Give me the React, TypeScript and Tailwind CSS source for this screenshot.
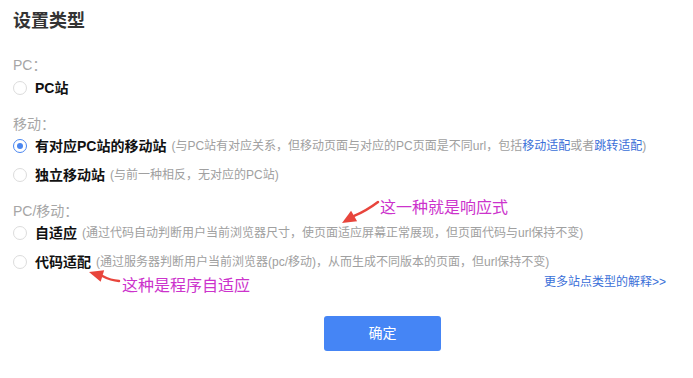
import { useState } from "react"

type Option = {
    id: string
    label: string
    desc?: React.ReactNode
}

const groups: { title: string; options: Option[] }[] = [
    {
        title: "PC：",
        options: [{ id: "pc", label: "PC站" }],
    },
    {
        title: "移动：",
        options: [
            {
                id: "m1",
                label: "有对应PC站的移动站",
                desc: (
                    <>
                        (与PC站有对应关系，但移动页面与对应的PC页面是不同url，包括
                        <a className="text-[#3a6fd8]">移动适配</a>或者
                        <a className="text-[#3a6fd8]">跳转适配</a>)
                    </>
                ),
            },
            { id: "m2", label: "独立移动站", desc: "(与前一种相反，无对应的PC站)" },
        ],
    },
    {
        title: "PC/移动：",
        options: [
            { id: "r1", label: "自适应", desc: "(通过代码自动判断用户当前浏览器尺寸，使页面适应屏幕正常展现，但页面代码与url保持不变)" },
            { id: "r2", label: "代码适配", desc: "(通过服务器判断用户当前浏览器(pc/移动)，从而生成不同版本的页面，但url保持不变)" },
        ],
    },
]

const Radio = ({ checked }: { checked: boolean }) => (
    <span
        className={`w-[14px] h-[14px] rounded-full border flex items-center justify-center shrink-0 ${checked ? "border-[#4a86f0]" : "border-[#dcdcdc]"}`}
    >
        {checked && <span className="w-[6px] h-[6px] rounded-full bg-[#4a86f0]" />}
    </span>
)

const Arrow = ({ x1, y1, x2, y2 }: { x1: number; y1: number; x2: number; y2: number }) => {
    const ang = Math.atan2(y2 - y1, x2 - x1)
    const len = 14
    const w = 6
    const bx = x2 - Math.cos(ang) * len
    const by = y2 - Math.sin(ang) * len
    const px = -Math.sin(ang) * w
    const py = Math.cos(ang) * w
    return (
        <g>
            <path d={`M${x1} ${y1} Q${(x1 + bx) / 2} ${(y1 + by) / 2 + 2} ${bx} ${by}`} stroke="#e8453c" strokeWidth="2.5" fill="none" strokeLinecap="round" />
            <polygon points={`${x2},${y2} ${bx + px},${by + py} ${bx - px},${by - py}`} fill="#e8453c" />
        </g>
    )
}

export default function App() {
    const [selected, setSelected] = useState("m1")
    const rowTops: Record<string, string> = {
        pc: "mt-[3px]",
        m1: "mt-[2px]",
        m2: "mt-[9px]",
        r1: "mt-[2px]",
        r2: "mt-[9px]",
    }
    const groupTops = ["mt-[22px]", "mt-[16px]", "mt-[16px]"]

    return (
        <div
            className="relative w-[693px] h-[378px] bg-white overflow-hidden"
            style={{ fontFamily: '"Liberation Sans", "Noto Sans CJK SC", sans-serif' }}
        >
            <div className="pl-[13px] pt-[9px]">
                <h1 className="h-[24px] text-[18px] leading-[24px] font-bold text-[#333]">设置类型</h1>

                {groups.map((g, gi) => (
                    <div key={g.title} className={groupTops[gi]}>
                        <div className="h-[20px] flex items-center text-[14px] text-[#a6a6a6]">{g.title}</div>
                        {g.options.map(o => (
                            <div
                                key={o.id}
                                className={`flex items-center h-[20px] cursor-pointer ${rowTops[o.id]}`}
                                onClick={() => setSelected(o.id)}
                            >
                                <Radio checked={selected === o.id} />
                                <span className="ml-[8px] text-[14px] font-bold text-[#111] whitespace-nowrap">{o.label}</span>
                                {o.desc && (
                                    <span className="ml-[5px] text-[12px] text-[#a0a0a0] whitespace-nowrap">{o.desc}</span>
                                )}
                            </div>
                        ))}
                    </div>
                ))}

                <div className="h-[16px] flex items-center justify-end pr-[27px] mt-[2px]">
                    <a className="text-[12px] text-[#3a6fd8]">更多站点类型的解释&gt;&gt;</a>
                </div>

                <div className="flex justify-center pr-[13px] mt-[26px]">
                    <button className="w-[117px] h-[35px] rounded-[3px] bg-[#4585f5] text-white text-[14px] ml-[72px]">
                        确定
                    </button>
                </div>
            </div>

            <div className="absolute left-[380px] top-[197px] text-[16px] leading-[22px] text-[#cc33cc] whitespace-nowrap">
                这一种就是响应式
            </div>
            <div className="absolute left-[122px] top-[275px] text-[16px] leading-[22px] text-[#cc33cc] whitespace-nowrap">
                这种是程序自适应
            </div>

            <svg className="absolute inset-0 pointer-events-none" width="693" height="378">
                <Arrow x1={378} y1={202} x2={342} y2={223} />
                <Arrow x1={119} y1={281} x2={89} y2={272} />
            </svg>
        </div>
    )
}
